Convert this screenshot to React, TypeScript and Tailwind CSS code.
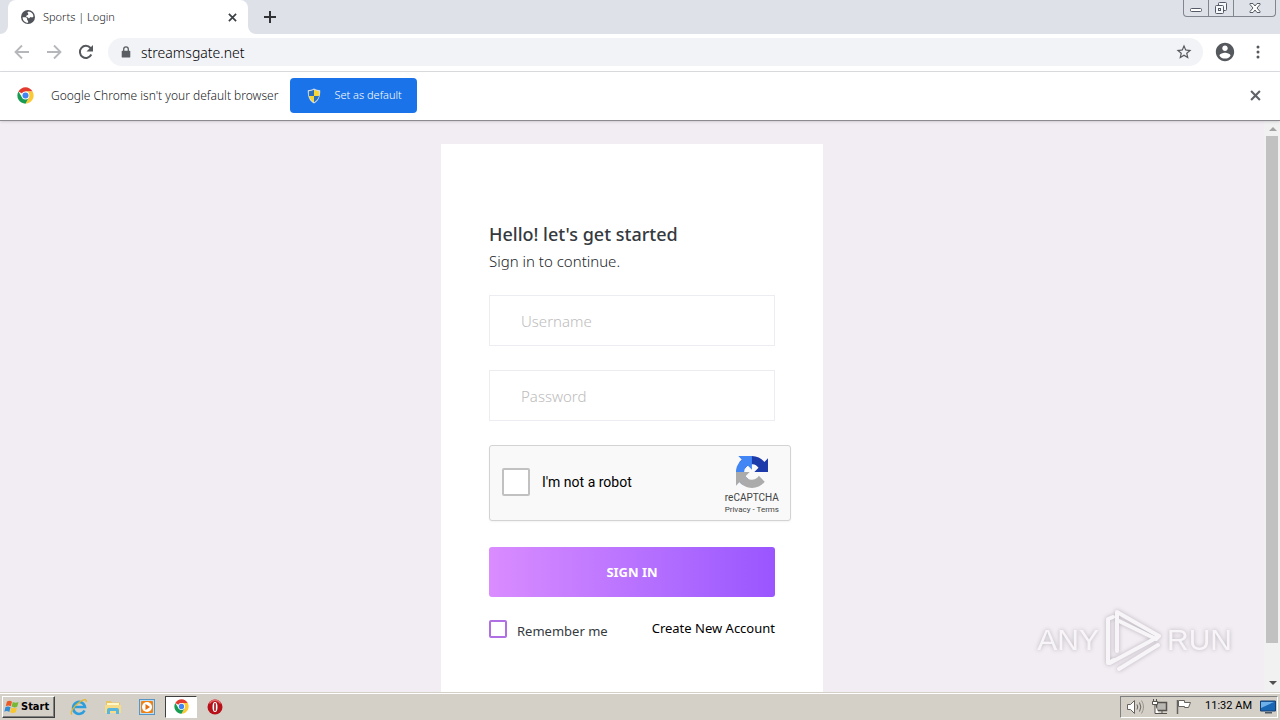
import { useState } from "react";
import type { ReactNode } from "react";

const uiFont = "font-['Noto_Sans','Open_Sans',sans-serif]";

function GlobeIcon() {
  return (
    <svg className="size-4 shrink-0" viewBox="0 0 16 16" aria-hidden="true">
      <circle cx="8" cy="8" r="7" fill="#50545a" />
      <path d="M2.600 8.200h3.200l1.300 1.400v1.500l1 1v1.600c-3 .2-5.400-2.200-5.500-5.500zM8.600 2.500c2.600.2 4.700 2.300 4.900 5l-1.300 1-1.700-.5-1.600 1.400-1.200-1.200H6.300V6.700l1.900-.9V4.500l-.9-.9z" fill="#fff" />
    </svg>
  );
}

function CloseIcon({ className }: { className: string }) {
  return (
    <svg className={className} viewBox="0 0 10 10" aria-hidden="true">
      <path d="M1 1l8 8M9 1L1 9" stroke="currentColor" strokeWidth="1.900" fill="none" />
    </svg>
  );
}

function ChromeIcon({ className }: { className: string }) {
  return (
    <svg className={className} viewBox="0 0 48 48" aria-hidden="true">
      <path d="M24 24L4.100 12.500A23 23 0 0 1 43.900 12.500L24 13z" fill="#e33b2e" />
      <path d="M43.900 12.500A23 23 0 0 1 24 47L33.500 29.500L24 13z" fill="#fcc934" />
      <path d="M24 47A23 23 0 0 1 4.100 12.500L14.500 29.500L33.500 29.500z" fill="#179c52" />
      <circle cx="24" cy="24" r="11" fill="#fff" />
      <circle cx="24" cy="24" r="8.500" fill="#4285f4" />
    </svg>
  );
}

function ShieldIcon() {
  return (
    <svg className="size-4" viewBox="0 0 16 16" aria-hidden="true">
      <path d="M8 .5c2 1.200 4 1.700 6.200 1.700C14.500 8.500 12.500 13 8 15.500 3.500 13 1.500 8.500 1.800 2.200 4 2.200 6 1.700 8 .5z" fill="#d5dde5" />
      <path d="M8 1.800V8H3C2.800 6.500 2.800 5 2.900 3.300 4.700 3.200 6.500 2.700 8 1.800z" fill="#2c70bd" />
      <path d="M8 1.800V8h5c.2-1.500.2-3 .1-4.700C11.300 3.200 9.500 2.700 8 1.800z" fill="#f8d734" />
      <path d="M3 8h5v6.300C5.300 12.700 3.700 10.500 3 8z" fill="#f8d734" />
      <path d="M13 8H8v6.300c2.700-1.600 4.300-3.800 5-6.300z" fill="#2c70bd" />
    </svg>
  );
}

function TabStrip() {
  return (
    <div className="flex h-[34px] items-stretch bg-[#dee1e8]">
      <div className="flex w-2 bg-white">
        <div className="flex-1 rounded-br-lg bg-[#dee1e8]" />
      </div>
      <div className="flex w-60 items-center rounded-t-lg bg-white pr-2 pl-3">
        <GlobeIcon />
        <span className="ml-[7px] flex-1 text-[11px] font-light text-[#202124]">Sports | Login</span>
        <button type="button" aria-label="Close tab" className="grid size-4 place-items-center text-[#3c4043]">
          <CloseIcon className="size-[9px]" />
        </button>
      </div>
      <div className="flex w-2 bg-white">
        <div className="flex-1 rounded-bl-lg bg-[#dee1e8]" />
      </div>
      <button type="button" aria-label="New tab" className="grid w-7 place-items-center text-[#303236]">
        <svg className="size-3" viewBox="0 0 12 12" aria-hidden="true">
          <path d="M6 0v12M0 6h12" stroke="currentColor" strokeWidth="2" />
        </svg>
      </button>
      <div className="mr-1 ml-auto flex h-[17px] rounded-b border border-t-0 border-[#81858e]">
        <button type="button" aria-label="Minimize" className="grid w-[25px] place-items-center border-r border-[#81858e]">
          <svg className="h-4 w-4" viewBox="0 0 16 16" aria-hidden="true">
            <rect x="2.500" y="8.500" width="11" height="3" rx="1" fill="#fff" stroke="#555b66" />
          </svg>
        </button>
        <button type="button" aria-label="Restore" className="grid w-[25px] place-items-center border-r border-[#81858e]">
          <svg className="h-4 w-4" viewBox="0 0 16 16" fill="#f7f8fa" stroke="#555b66" aria-hidden="true">
            <rect x="5.500" y="2.500" width="8" height="8" rx="1" />
            <rect x="2.500" y="5.500" width="8" height="8" rx="1" />
            <rect x="5.500" y="8.500" width="2" height="2" />
          </svg>
        </button>
        <button type="button" aria-label="Close window" className="grid w-[41px] place-items-center">
          <svg className="h-4 w-4" viewBox="0 0 16 16" aria-hidden="true">
            <path d="M3 3.500h3l2 2.500 2-2.500h3v1L10 8l3 3.500v1h-3L8 10l-2 2.500H3v-1L6 8 3 4.500z" fill="#fff" stroke="#555b66" />
          </svg>
        </button>
      </div>
    </div>
  );
}

function Toolbar() {
  return (
    <div className="flex h-[38px] items-center border-b border-[#dcdde0] bg-white pr-3.5 pb-px pl-2">
      <button type="button" aria-label="Back" className="grid w-7 place-items-center text-[#b5b7ba]">
        <svg className="size-4" viewBox="0 0 16 16" fill="none" stroke="currentColor" strokeWidth="1.800" aria-hidden="true">
          <path d="M15 8H2M8 1.500L1.500 8L8 14.500" />
        </svg>
      </button>
      <button type="button" aria-label="Forward" className="ml-1 grid w-7 place-items-center text-[#b5b7ba]">
        <svg className="size-4" viewBox="0 0 16 16" fill="none" stroke="currentColor" strokeWidth="1.800" aria-hidden="true">
          <path d="M1 8h13M8 1.500L14.500 8L8 14.500" />
        </svg>
      </button>
      <button type="button" aria-label="Reload" className="ml-1 grid w-7 place-items-center text-[#55585d]">
        <svg className="size-4" viewBox="0 0 16 16" aria-hidden="true">
          <path d="M13.300 10.500A6 6 0 1 1 12.500 4L14 5.500" fill="none" stroke="currentColor" strokeWidth="2" />
          <path d="M15 1v6.500H8.500z" fill="currentColor" />
        </svg>
      </button>
      <div className="ml-2 flex h-7 flex-1 items-center rounded-full bg-[#f1f3f6] pr-2.5 pl-3">
        <svg className="size-3" viewBox="0 0 12 14" aria-hidden="true">
          <rect x="1" y="5.500" width="10" height="8" rx="1" fill="#5a5d61" />
          <path d="M3.300 6V3.700a2.700 2.700 0 0 1 5.400 0V6" fill="none" stroke="#5a5d61" strokeWidth="1.500" />
        </svg>
        <input
          aria-label="Address and search bar"
          defaultValue="streamsgate.net"
          className="ml-[9px] min-w-0 flex-1 bg-transparent text-[14px] font-light text-black outline-none"
        />
        <button type="button" aria-label="Bookmark this page" className="text-[#55585d]">
          <svg className="size-[18px]" viewBox="0 0 24 24" fill="currentColor" aria-hidden="true">
            <path d="M22 9.240l-7.190-.62L12 2 9.190 8.630 2 9.240l5.460 4.730L5.820 21 12 17.270 18.180 21l-1.630-7.030L22 9.240zM12 15.400l-3.760 2.270 1-4.280-3.320-2.880 4.380-.38L12 6.100l1.710 4.040 4.380.38-3.320 2.880 1 4.280L12 15.400z" />
          </svg>
        </button>
      </div>
      <button type="button" aria-label="Profile" className="ml-[11px] text-[#55585d]">
        <svg className="size-[22px]" viewBox="0 0 24 24" fill="currentColor" aria-hidden="true">
          <path d="M12 2C6.480 2 2 6.480 2 12s4.480 10 10 10 10-4.480 10-10S17.520 2 12 2zm0 3c1.660 0 3 1.340 3 3s-1.340 3-3 3-3-1.340-3-3 1.340-3 3-3zm0 14.200c-2.500 0-4.710-1.280-6-3.220.03-1.990 4-3.080 6-3.080 1.990 0 5.970 1.090 6 3.080-1.290 1.940-3.500 3.220-6 3.220z" />
        </svg>
      </button>
      <button type="button" aria-label="Browser menu" className="ml-3.5 text-[#55585d]">
        <svg className="size-4" viewBox="0 0 16 16" fill="currentColor" aria-hidden="true">
          <circle cx="8" cy="3" r="1.500" />
          <circle cx="8" cy="8" r="1.500" />
          <circle cx="8" cy="13" r="1.500" />
        </svg>
      </button>
    </div>
  );
}

function InfoBar() {
  return (
    <div className="z-10 flex h-[49px] items-center border-b border-[#8e8b90] bg-white px-[17px] pb-px shadow-sm">
      <ChromeIcon className="size-[17px]" />
      <span className="ml-[17px] text-[12px] font-light text-[#202124]">Google Chrome isn't your default browser</span>
      <button type="button" className="ml-3 flex h-[35px] w-[127px] items-center gap-3 rounded bg-[#1a73e8] pl-4 text-[11px] font-light whitespace-nowrap text-white">
        <ShieldIcon />
        Set as default
      </button>
      <button type="button" aria-label="Dismiss" className="ml-auto grid size-4 place-items-center text-[#5f6368]">
        <CloseIcon className="size-[11px]" />
      </button>
    </div>
  );
}

function RecaptchaLogo() {
  return (
    <svg className="h-8 w-8" viewBox="0 0 64 64" aria-hidden="true">
      <path d="M64 31.955l-.033-1.370V4.687l-7.160 7.160C50.948 4.674 42.033.093 32.050.093c-10.400 0-19.622 4.960-25.458 12.640l11.736 11.860a15.550 15.550 0 0 1 4.754-5.334c2.050-1.600 4.952-2.906 8.968-2.906.485 0 .86.057 1.135.163 4.976.393 9.288 3.140 11.828 7.124l-8.307 8.307L64 31.953" fill="#1c3aa9" />
      <path d="M31.862.094l-1.370.033H4.594l7.160 7.160C4.580 13.147 0 22.060 0 32.046c0 10.400 4.960 19.622 12.640 25.458L24.500 45.768a15.550 15.550 0 0 1-5.334-4.754c-1.600-2.050-2.906-4.952-2.906-8.968 0-.485.057-.86.163-1.135.393-4.976 3.140-9.288 7.124-11.828l8.307 8.307L31.860.095" fill="#4285f4" />
      <path d="M.001 32.045l.033 1.370v25.898l7.160-7.160c5.860 7.173 14.774 11.754 24.760 11.754 10.400 0 19.622-4.960 25.458-12.640l-11.736-11.860a15.550 15.550 0 0 1-4.754 5.334c-2.050 1.600-4.952 2.906-8.968 2.906-.485 0-.86-.057-1.135-.163-4.976-.393-9.288-3.140-11.828-7.124l8.307-8.307L.001 32.047" fill="#ababab" />
    </svg>
  );
}

function LoginCard() {
  const [robot, setRobot] = useState(false);
  const [remember, setRemember] = useState(false);
  const field =
    "block h-[51px] w-full border border-[#ebedf2] bg-white px-[31px] text-[15px] font-light text-[#343a40] outline-none placeholder:text-[#bdbcbc]";
  return (
    <form className="w-[382px] bg-white px-12 pt-[78px] pb-20" onSubmit={(e) => e.preventDefault()}>
      <h1 className="text-[18px] leading-6 font-medium text-[#343a40]">Hello! let's get started</h1>
      <p className="mt-[3px] text-[15px] leading-6 font-light text-[#22262a]">Sign in to continue.</p>
      <div className="mt-[22px] flex flex-col gap-6">
        <input type="text" aria-label="Username" placeholder="Username" className={field} />
        <input type="password" aria-label="Password" placeholder="Password" className={field} />
        <div className="flex h-[76px] w-[302px] items-center rounded-[3px] border border-[#d3d3d3] bg-[#f9f9f9] pr-[11px] pb-0.5 pl-3 font-[Roboto,sans-serif] shadow-xs">
          <input
            id="robot"
            type="checkbox"
            checked={robot}
            onChange={(e) => setRobot(e.target.checked)}
            className="size-7 appearance-none rounded-xs border-2 border-[#c1c1c1] bg-white checked:bg-[#4285f4]"
          />
          <label htmlFor="robot" className="ml-3 flex-1 text-[14px] text-black">
            I'm not a robot
          </label>
          <div className="flex flex-col items-center pt-2 text-[#444]">
            <RecaptchaLogo />
            <span className="mt-1 text-[10px] leading-3">reCAPTCHA</span>
            <span className="text-[8px] leading-3">
              <a href="#privacy">Privacy</a>
              <span> - </span>
              <a href="#terms">Terms</a>
            </span>
          </div>
        </div>
      </div>
      <button
        type="submit"
        className="mt-[26px] h-[50px] w-full rounded-[3px] bg-linear-to-r from-[#da8cff] to-[#9a55ff] pt-0.5 text-[13px] font-bold text-white"
      >
        SIGN IN
      </button>
      <div className="mt-[22px] flex items-start justify-between text-[13px] leading-[18px]">
        <label className="flex items-start gap-2.5 pt-px text-[#343a40]">
          <input
            type="checkbox"
            checked={remember}
            onChange={(e) => setRemember(e.target.checked)}
            className="size-[18px] appearance-none rounded-xs border-2 border-[#b070e4] bg-white checked:bg-[#b66dff]"
          />
          <span className="pt-0.5">Remember me</span>
        </label>
        <a href="#register" className="text-black">
          Create New Account
        </a>
      </div>
    </form>
  );
}

function Watermark() {
  return (
    <div className="pointer-events-none absolute right-8 bottom-5 flex items-center gap-1.5 font-['Liberation_Sans_Narrow','Liberation_Sans',sans-serif] text-[30px] leading-none text-[#f8f5f9] drop-shadow-[0_0_2px_#b8b2ba]">
      <span>ANY</span>
      <svg className="h-[64px] w-[56px]" viewBox="0 0 56 64" fill="none" stroke="currentColor" strokeWidth="4" strokeLinejoin="round" strokeLinecap="round" aria-hidden="true">
        <path d="M8 9L3 11v44l6-3" />
        <path d="M12 43V4l42 24-3 3L14 13" />
        <path d="M5 55l46-25M14 61l39-24" />
      </svg>
      <span>RUN</span>
    </div>
  );
}

function Scrollbar() {
  return (
    <div className="flex w-4 shrink-0 flex-col items-center bg-[#f1f1f1]" aria-hidden="true">
      <svg className="size-[15px]" viewBox="0 0 15 15">
        <path d="M4 10h8L8 6z" fill="#a3a3a3" />
      </svg>
      <div className="w-3 flex-1 bg-[#c1c1c1]" />
      <svg className="mt-8 h-[17px] w-[15px]" viewBox="0 0 15 17">
        <path d="M4 6h8l-4 4z" fill="#505050" />
      </svg>
    </div>
  );
}

function TaskButton({ label, active, children }: { label: string; active?: boolean; children: ReactNode }) {
  return (
    <button
      type="button"
      aria-label={label}
      className={
        active
          ? "grid h-[22px] w-8 place-items-center border border-t-[#404040] border-r-white border-b-white border-l-[#404040] bg-white"
          : "grid h-[22px] w-8 place-items-center"
      }
    >
      {children}
    </button>
  );
}

function Taskbar() {
  return (
    <div className="flex h-7 shrink-0 items-center border-t border-[#d4d0c8] bg-[#d4d0c8] pr-0.5 pl-0.5 shadow-[inset_0_1px_0_#fff]">
      <button
        type="button"
        className="flex h-[22px] w-[53px] items-center gap-px border border-t-white border-r-[#404040] border-b-[#404040] border-l-white pl-px font-['DejaVu_Sans_Condensed','DejaVu_Sans',sans-serif] text-[11px] font-bold text-black shadow-[inset_-1px_-1px_0_#808080]"
      >
        <svg className="size-4 shrink-0" viewBox="0 0 16 16" aria-hidden="true">
          <path d="M3 2.500c2-1 3.500-.8 5 .2L6.800 7.300c-1.600-1-3-1-5-.2z" fill="#e95a28" />
          <path d="M8.800 3c2 1 3.700 1 5.700 0l-1.300 4.700c-1.900 1-3.700.9-5.600-.1z" fill="#77b936" />
          <path d="M1.500 8.100c2-.9 3.500-.8 5 .2l-1.200 4.600c-1.700-1-3.200-1-5-.2z" fill="#328bd3" />
          <path d="M7.300 8.600c2 1 3.700 1 5.600.1l-1.200 4.600c-2 1-3.800.9-5.600-.1z" fill="#f8c62d" />
        </svg>
        <span className="pt-0.5">Start</span>
      </button>
      <div className="ml-2 flex items-center gap-0.5">
        <TaskButton label="Internet Explorer">
          <svg className="size-[18px]" viewBox="0 0 18 18" fill="none" aria-hidden="true">
            <path d="M14.500 12.500A6 6 0 1 1 15 9H4" stroke="#2c9ddd" strokeWidth="2.600" />
            <path d="M2 16.500C-.5 14.500 4 8 9 4.500S17 .7 16 4" stroke="#e4b62d" strokeWidth="1.300" />
          </svg>
        </TaskButton>
        <TaskButton label="File Explorer">
          <svg className="size-[18px]" viewBox="0 0 18 18" aria-hidden="true">
            <path d="M2 3h5l1 1.500h8V15H2z" fill="#e8c564" />
            <path d="M3 5h12v4H3z" fill="#fff7c9" />
            <path d="M1 7h16v8H1z" fill="#f6dc88" />
            <path d="M3 16v-4q0-2 2-2h8q2 0 2 2v4h-3v-3H6v3z" fill="#58b5dd" />
          </svg>
        </TaskButton>
        <TaskButton label="Media Player">
          <svg className="size-[18px]" viewBox="0 0 18 18" aria-hidden="true">
            <rect x="1.500" y="1.500" width="15" height="15" fill="#b9def5" stroke="#5795c6" />
            <rect x="3" y="3" width="12" height="12" rx="1" fill="#ef8212" />
            <circle cx="9" cy="9" r="5" fill="#fff" />
            <path d="M7.500 6l4.500 3-4.500 3z" fill="#e66d0b" />
          </svg>
        </TaskButton>
        <TaskButton label="Google Chrome" active>
          <ChromeIcon className="size-[15px]" />
        </TaskButton>
        <TaskButton label="Opera">
          <svg className="size-4" viewBox="0 0 16 16" aria-hidden="true">
            <circle cx="8" cy="8" r="7.500" fill="#b71018" />
            <path d="M2.500 4.500a6.300 6.300 0 0 1 11 0" fill="none" stroke="#e46a6c" strokeWidth="1.500" />
            <ellipse cx="8" cy="8" rx="2.500" ry="5" fill="#fff" />
            <rect x="7.200" y="4" width="1.600" height="8" rx=".8" fill="#9c0c13" />
          </svg>
        </TaskButton>
      </div>
      <div className="ml-auto flex h-[22px] items-center border border-t-[#808080] border-r-white border-b-white border-l-[#808080] pr-px pl-1.5">
        <svg className="size-[18px]" viewBox="0 0 18 18" fill="#fff" stroke="#66635e" aria-hidden="true">
          <path d="M.5 6.500h3l4-4v13l-4-4h-3z" />
          <path d="M10 6.500q1.500 2.500 0 5M12.500 4.500q2.700 4.500 0 9" fill="none" />
          <path d="M14.500 2.500q4 6.500 0 13" fill="none" stroke="#98958f" />
        </svg>
        <svg className="ml-1.5 size-[18px]" viewBox="0 0 18 18" fill="#fff" stroke="#55524e" aria-hidden="true">
          <rect x="5.500" y="4.500" width="10" height="8" fill="#b9b7b2" strokeWidth="1.500" />
          <path d="M8 15.500h8M11 13v2" />
          <path d="M1.500 3.500h5v3h-5zM2.500 1v2M5.500 1v2M4 7v8.500h4" />
        </svg>
        <svg className="ml-1.5 size-[18px]" viewBox="0 0 18 18" fill="#fff" stroke="#66635e" aria-hidden="true">
          <path d="M2.500 2v14" strokeWidth="1.500" />
          <path d="M3.500 2.500h6v2h6l-2 5h-4v-1h-6z" />
        </svg>
        <span className="ml-3 font-[Roboto,sans-serif] text-[11px] text-black">11:32 AM</span>
        <svg className="ml-2 size-4" viewBox="0 0 16 16" aria-hidden="true">
          <path d="M.5 2h15v10H.5z" fill="#1767b5" stroke="#183f70" />
          <path d="M1 3h13L1 9z" fill="#6db0ea" />
          <path d="M5 13h7v1.500H5z" fill="#4b5866" />
        </svg>
      </div>
    </div>
  );
}

export default function App() {
  return (
    <div className={`flex h-screen flex-col overflow-hidden bg-white ${uiFont}`}>
      <header className="flex shrink-0 flex-col">
        <TabStrip />
        <Toolbar />
        <InfoBar />
      </header>
      <div className="flex min-h-0 flex-1">
        <main className="relative flex flex-1 items-start justify-center overflow-hidden bg-[#f2edf3] pt-[23px]">
          <LoginCard />
          <Watermark />
        </main>
        <Scrollbar />
      </div>
      <Taskbar />
    </div>
  );
}
